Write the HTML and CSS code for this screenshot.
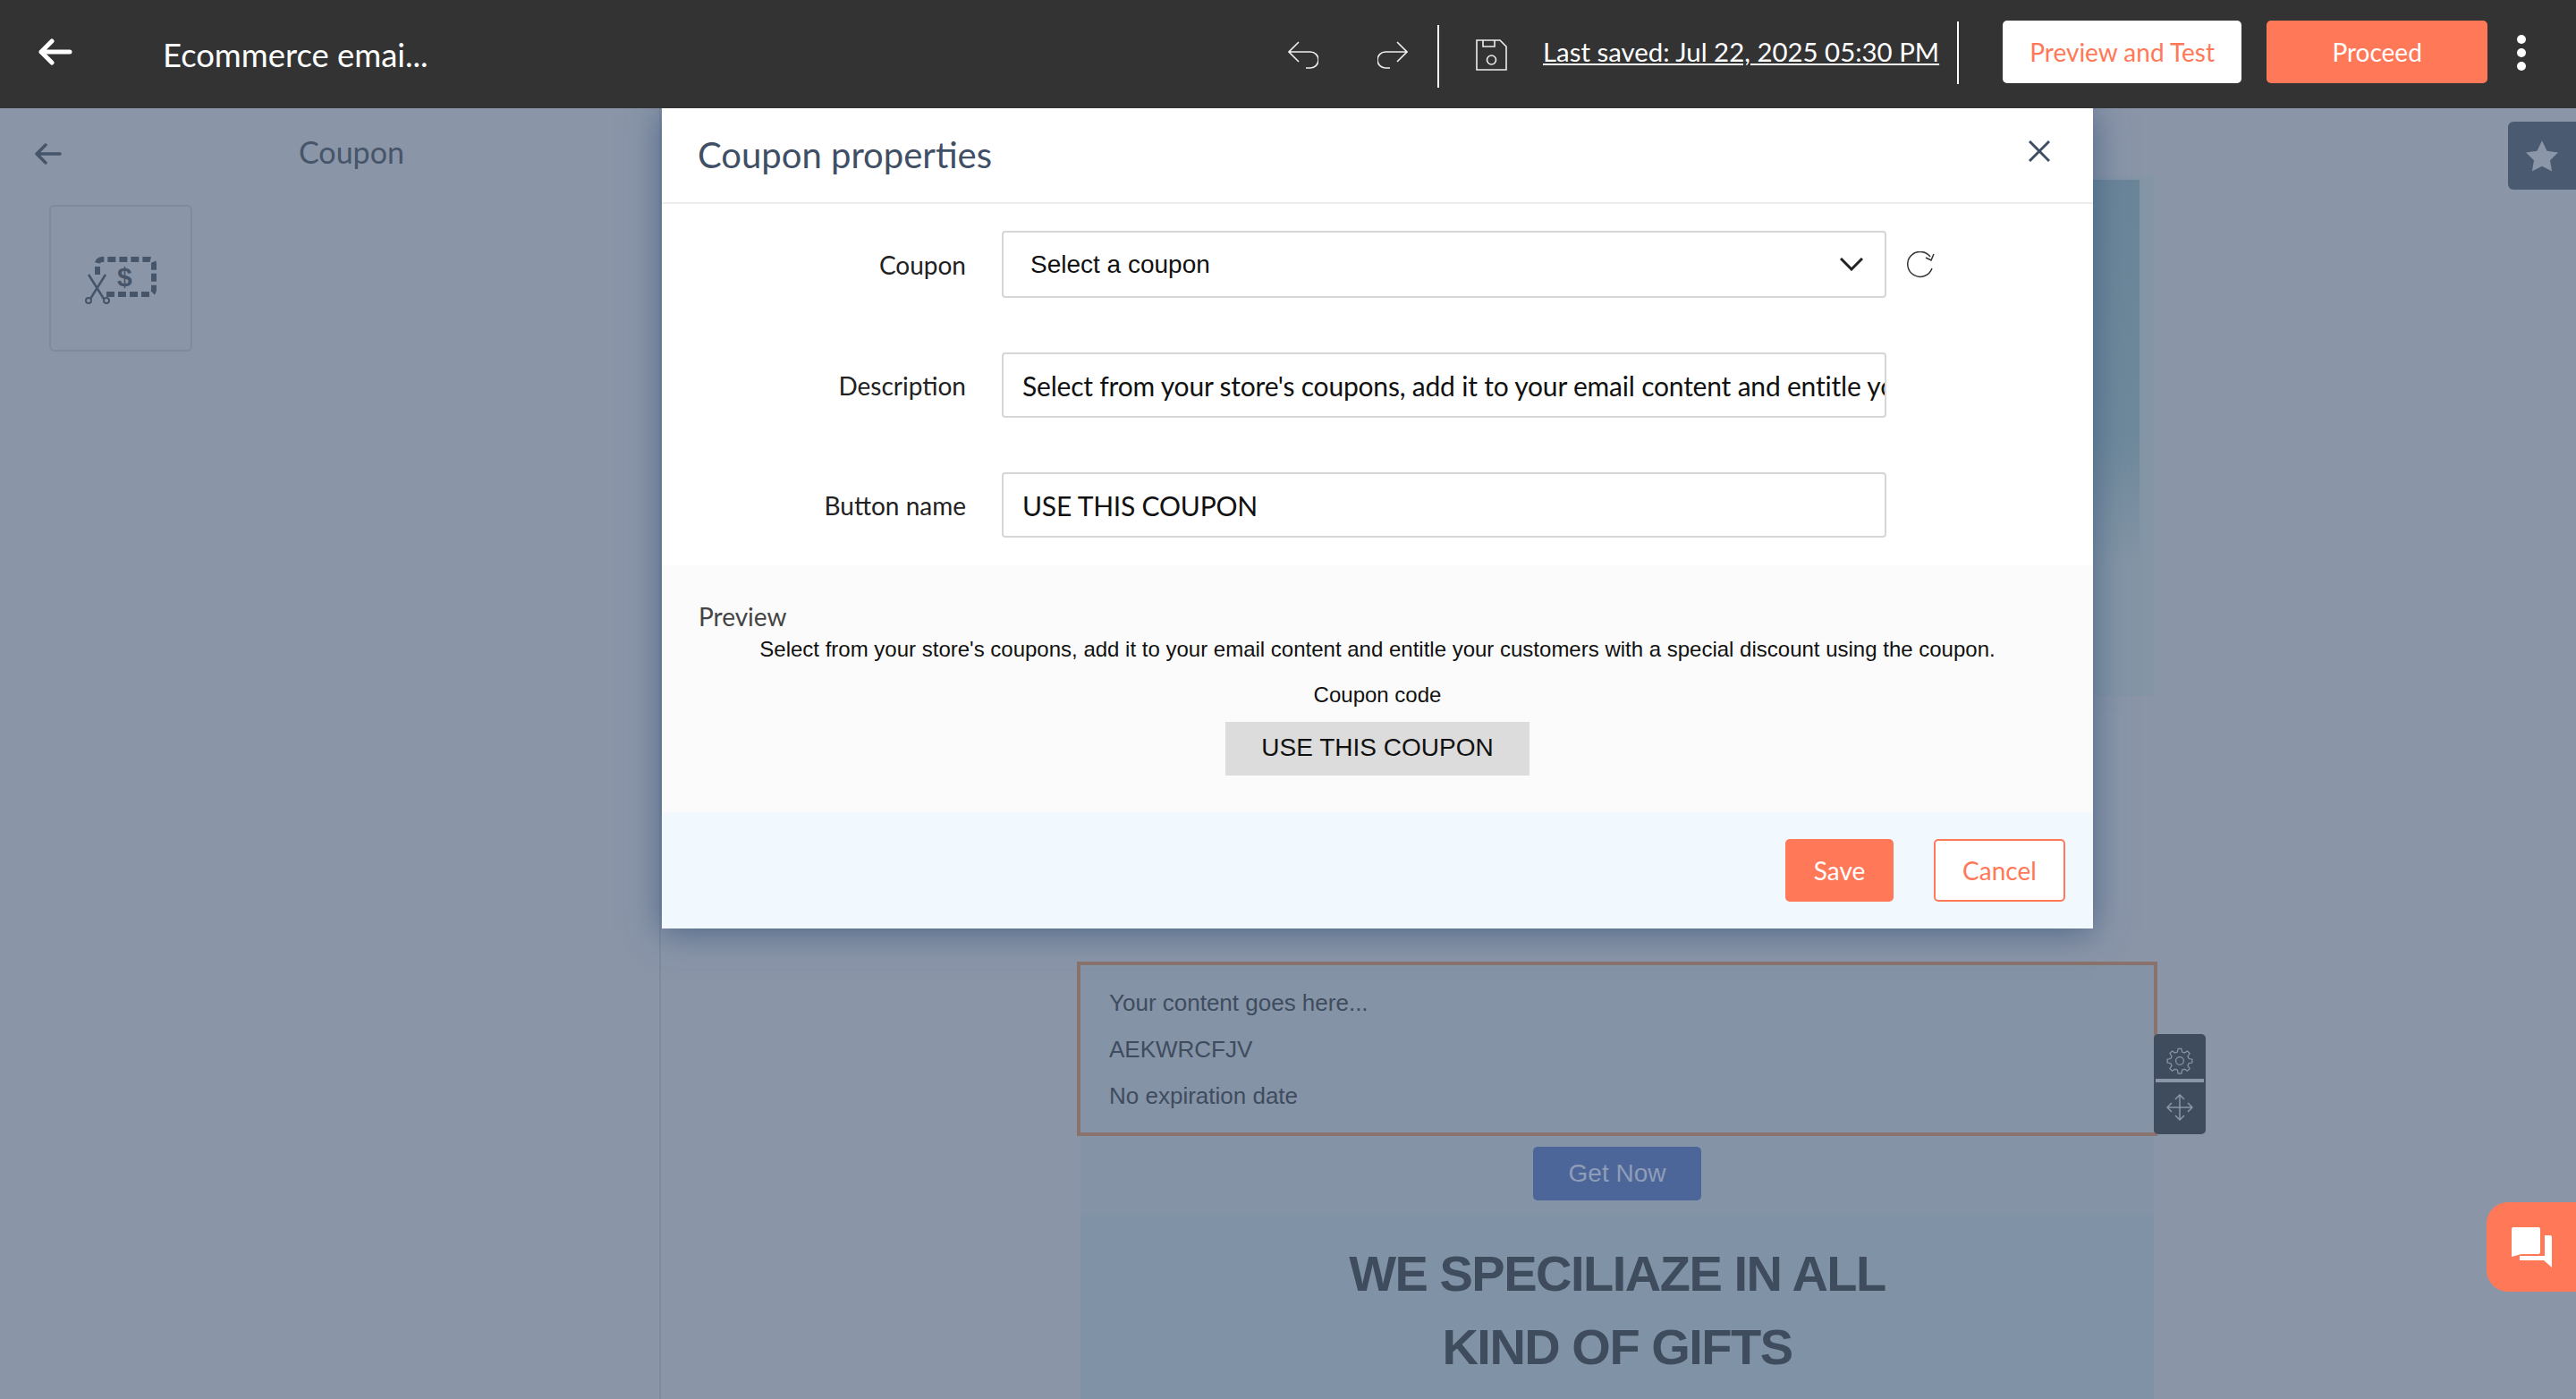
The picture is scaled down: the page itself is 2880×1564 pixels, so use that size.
FILE: index.html
```html
<!DOCTYPE html>
<html lang="en">
<head>
    <meta charset="UTF-8">
    <meta name="viewport" content="width=device-width, initial-scale=1.0">
    <title>Coupon properties</title>
    <link rel="stylesheet" href="styles.css">
</head>
<body>

    <header class="topbar">
        <button class="top-back">
            <svg width="38" height="30" viewBox="0 0 38 30" fill="none" stroke="#fff" stroke-width="5" stroke-linecap="round" stroke-linejoin="round"><path d="M35 15H3M15 3 3 15l12 12"/></svg>
        </button>
        <div class="doc-name">Ecommerce emai...</div>
        <div class="top-tools">
            <svg class="undo" width="34" height="31" viewBox="0 0 34 31" fill="none" stroke="#eee" stroke-width="1.6"><path d="M12 1 1 12l11 11M1 12h24a7.500 7.500 0 0 1 0 18h-5"/></svg>
            <svg class="redo" width="34" height="31" viewBox="0 0 34 31" fill="none" stroke="#eee" stroke-width="1.6"><path d="M22 1l11 11-11 11M33 12H9a7.500 7.500 0 0 0 0 18h5"/></svg>
            <span class="divider"></span>
            <svg class="save-icon" width="35" height="35" viewBox="0 0 35 35" fill="none" stroke="#eee" stroke-width="1.6"><path d="M1 1h26l7 7v26H1zM8 1v7h13V1"/><circle cx="17.500" cy="23" r="5"/></svg>
            <a class="last-saved">Last saved: Jul 22, 2025 05:30 PM</a>
            <span class="divider high"></span>
        </div>
        <button class="btn btn-white">Preview and Test</button>
        <button class="btn btn-orange">Proceed</button>
        <div class="dots"><i></i><i></i><i></i></div>
    </header>

    <main class="workspace">
        <aside class="side-panel">
            <div class="side-head">
                <svg width="30" height="24" viewBox="0 0 30 24" fill="none" stroke="#47556a" stroke-width="3.500" stroke-linecap="round" stroke-linejoin="round"><path d="M28 12H2M12 2 2 12l10 10"/></svg>
                <span>Coupon</span>
            </div>
            <div class="coupon-tile">
                <svg class="tile-icon" width="80" height="54" viewBox="0 0 80 54" fill="none">
                    <path d="M14 20V8a5 5 0 0 1 5-5h53a5 5 0 0 1 5 5v29a5 5 0 0 1-5 5H24" stroke="#47556a" stroke-width="6" stroke-dasharray="9 4"/>
                    <text x="36" y="33" class="tile-dollar">$</text>
                    <path d="M4 20l17 27M23 20 6 47" stroke="#47556a" stroke-width="2.500"/>
                    <circle cx="4" cy="49" r="3" stroke="#47556a" stroke-width="2"/>
                    <circle cx="24" cy="49" r="3" stroke="#47556a" stroke-width="2"/>
                </svg>
            </div>
        </aside>

        <section class="canvas">
            <div class="email">
                <div class="hero-block"><div class="hero-image"></div></div>
                <div class="text-block"></div>
                <div class="coupon-block">
                    <p>Your content goes here...</p>
                    <p>AEKWRCFJV</p>
                    <p>No expiration date</p>
                    <div class="block-tools">
                        <svg width="30" height="30" viewBox="0 0 24 24" fill="none" stroke="#8a95a8" stroke-width="1"><circle cx="12" cy="12" r="3.500"/><path d="M10.500 1h3l.6 3 2.200.9 2.500-1.700 2.100 2.100-1.700 2.500.9 2.200 3 .6v3l-3 .6-.9 2.200 1.700 2.500-2.100 2.100-2.500-1.700-2.200.9-.6 3h-3l-.6-3-2.200-.9-2.500 1.700-2.100-2.100 1.700-2.500-.9-2.200-3-.6v-3l3-.6.9-2.200-1.700-2.500 2.100-2.100 2.500 1.700 2.200-.9z"/></svg>
                        <span class="tools-sep"></span>
                        <svg width="30" height="30" viewBox="0 0 30 30" fill="none" stroke="#8a95a8" stroke-width="1.500"><path d="M15 1v28M1 15h28M10 6l5-5 5 5M10 24l5 5 5-5M6 10l-5 5 5 5M24 10l5 5-5 5"/></svg>
                    </div>
                </div>
                <div class="cta-row"><span class="cta">Get Now</span></div>
                <div class="gift-block">
                    <h2>WE SPECILIAZE IN ALL<br>KIND OF GIFTS</h2>
                </div>
            </div>
        </section>

        <div class="star-tab">
            <svg width="36" height="35" viewBox="0 0 24 23" fill="#8b96a8"><path d="M12 0l3.700 7.600 8.300 1.200-6 5.800 1.400 8.300L12 19l-7.400 3.900L6 14.600 0 8.800l8.300-1.200z"/></svg>
        </div>

        <div class="chat-tab">
            <svg width="46" height="45" viewBox="0 0 46 45" fill="#fff"><path d="M3 0h28a2 2 0 0 1 2 2v26a2 2 0 0 1-2 2H12L1 33V2a2 2 0 0 1 2-2z"/><path d="M38 9h6a2 2 0 0 1 2 2v34l-9-8H10v-5h28z"/></svg>
        </div>

        <div class="modal">
            <div class="modal-head">
                <h3>Coupon properties</h3>
                <svg width="24" height="24" viewBox="0 0 24 24" fill="none" stroke="#3f4d62" stroke-width="3"><path d="M1 1l22 22M23 1 1 23"/></svg>
            </div>
            <form class="modal-form">
                <div class="field-row row-coupon">
                    <label>Coupon</label>
                    <div class="field select-field">
                        <span>Select a coupon</span>
                        <svg width="26" height="15" viewBox="0 0 26 15" fill="none" stroke="#222" stroke-width="3"><path d="M1 1l12 12L25 1"/></svg>
                    </div>
                    <svg class="refresh" width="33" height="30" viewBox="0 0 33 30" fill="none" stroke="#333" stroke-width="1.500"><path d="M27 6A14 14 0 1 0 29 19"/><path d="M31 3l-3 7-6-3"/></svg>
                </div>
                <div class="field-row row-desc">
                    <label>Description</label>
                    <div class="field text-field">Select from your store's coupons, add it to your email content and entitle your customers with a special discount using the coupon.</div>
                </div>
                <div class="field-row row-name">
                    <label>Button name</label>
                    <div class="field text-field">USE THIS COUPON</div>
                </div>
            </form>
            <div class="preview">
                <div class="preview-title">Preview</div>
                <p class="preview-desc">Select from your store's coupons, add it to your email content and entitle your customers with a special discount using the coupon.</p>
                <p class="preview-code">Coupon code</p>
                <span class="preview-btn">USE THIS COUPON</span>
            </div>
            <div class="modal-foot">
                <button class="btn btn-orange btn-save">Save</button>
                <button class="btn btn-outline">Cancel</button>
            </div>
        </div>
    </main>

</body>
</html>
```

FILE: styles.css
```css
* {
    box-sizing: border-box;
}

body {
    margin: 0;
    height: 100vh;
    overflow: hidden;
    font-family: Lato, "Noto Sans", sans-serif;
    background-color: #8a95a8;
    display: flex;
    flex-direction: column;
}

svg {
    display: block;
    flex: none;
}

button {
    font-family: inherit;
}

/* top bar */
.topbar {
    height: 121px;
    flex: none;
    background-color: #333333;
    display: flex;
    align-items: center;
    color: white;
}

.top-back {
    background: none;
    border: none;
    padding: 0;
    margin: -5px 0 0 43px;
}

.doc-name {
    font-size: 36.400px;
    margin-left: 101px;
    width: 1258px;
}

.top-tools {
    display: flex;
    align-items: center;
}

.undo {
    margin-top: 2px;
}

.redo {
    margin: 2px 0 0 66px;
}

.divider {
    width: 2px;
    height: 70px;
    background-color: white;
    margin: 4px 0 0 33px;
}

.divider.high {
    margin: -4px 0 0 20px;
}

.save-icon {
    margin-left: 41px;
    margin-top: 2px;
}

.last-saved {
    font-size: 29.400px;
    text-decoration: underline;
    margin: -6px 0 0 40px;
    white-space: nowrap;
}

.btn {
    border: none;
    border-radius: 5px;
    font-size: 28px;
    height: 70px;
    cursor: pointer;
}

.topbar .btn {
    margin-top: -5px;
}

.btn-white {
    background-color: white;
    color: #ff7858;
    width: 267px;
    margin-left: 49px;
}

.btn-orange {
    background-color: #ff7858;
    color: white;
    width: 247px;
    margin-left: 28px;
}

.dots {
    margin: -4px 0 0 33px;
    display: flex;
    flex-direction: column;
    gap: 5px;
}

.dots i {
    display: block;
    width: 10px;
    height: 10px;
    border-radius: 50%;
    background-color: white;
}

/* page behind the dialog */
.workspace {
    flex: 1;
    position: relative;
    display: flex;
    overflow: hidden;
}

.side-panel {
    width: 739px;
    flex: none;
    border-right: 2px solid #7f8a9e;
    padding: 0 0 0 39px;
}

.side-head {
    display: flex;
    align-items: center;
    height: 54px;
    margin-top: 24px;
    color: #47556a;
    font-size: 34px;
}

.side-head span {
    margin: -6px 0 0 265px;
}

.coupon-tile {
    width: 160px;
    height: 164px;
    margin: 30px 0 0 16px;
    border: 2px solid #7f8a9e;
    border-radius: 6px;
    display: flex;
    align-items: center;
    justify-content: center;
}

.tile-icon {
    margin-top: 5px;
}

.tile-dollar {
    font-family: "Liberation Sans", sans-serif;
    font-weight: bold;
    font-size: 30px;
    fill: #47556a;
}

.canvas {
    flex: 1;
    display: flex;
    padding: 76px 0 0 469px;
}

.email {
    width: 1200px;
    display: flex;
    flex-direction: column;
}

.hero-block {
    height: 581px;
    flex: none;
    padding: 4px 16px 0 0;
    background-color: #8495a6;
}

.hero-image {
    height: 100%;
    background: linear-gradient(#6b8599, #6f899c 50%, #8495a6 75%);
}

.text-block {
    height: 252px;
    flex: none;
    margin: 19px 34px 26px 0;
    background-color: #8b96a9;
}

.coupon-block {
    position: relative;
    height: 195px;
    flex: none;
    margin: 0 -4px;
    padding: 27px 32px 0;
    border: 4px solid #8a736c;
    background-color: #8593a6;
    font-family: "Liberation Sans", sans-serif;
    font-size: 26px;
    color: #3f4c5e;
}

.coupon-block p {
    margin: 0 0 22px;
    line-height: 30px;
}

.block-tools {
    position: absolute;
    left: 100%;
    top: 77px;
    width: 58px;
    height: 112px;
    border-radius: 5px;
    background-color: #3f4c5e;
    display: flex;
    flex-direction: column;
    align-items: center;
    padding-top: 15px;
}

.tools-sep {
    width: 54px;
    height: 4px;
    margin: 5px 0 13px;
    background-color: #8a95a8;
}

.cta-row {
    display: flex;
    justify-content: center;
    padding-top: 12px;
    height: 87px;
    flex: none;
    background-color: #8593a6;
}

.cta {
    width: 188px;
    height: 60px;
    border-radius: 5px;
    background-color: #4d6699;
    color: #8f9db8;
    font-family: "Liberation Sans", sans-serif;
    font-size: 28px;
    line-height: 60px;
    text-align: center;
}

.gift-block {
    flex: 1;
    background-color: #8093a6;
    padding-top: 26px;
}

.gift-block h2 {
    margin: 0;
    font-family: "Liberation Sans", sans-serif;
    font-size: 56px;
    letter-spacing: -1.500px;
    line-height: 82px;
    text-align: center;
    color: #3f4c5e;
}

.star-tab {
    position: absolute;
    top: 15px;
    right: 0;
    width: 76px;
    height: 76px;
    border-radius: 6px 0 0 6px;
    background-color: #4a5a70;
    display: flex;
    align-items: center;
    justify-content: center;
}

.chat-tab {
    position: absolute;
    top: 1223px;
    right: 0;
    width: 100px;
    height: 100px;
    border-radius: 24px 0 0 24px;
    background-color: #ff7858;
    display: flex;
    align-items: center;
    padding-left: 27px;
}

/* dialog */
.modal {
    position: absolute;
    top: 0;
    left: 740px;
    width: 1600px;
    height: 917px;
    background-color: white;
    box-shadow: 0 4px 36px rgba(60, 90, 125, 0.8);
    display: flex;
    flex-direction: column;
}

.modal-head {
    height: 107px;
    flex: none;
    border-bottom: 2px solid #ededed;
    padding: 0 48px 0 40px;
    display: flex;
    align-items: center;
    justify-content: space-between;
}

.modal-head h3 {
    margin: -2px 0 0;
    font-size: 40px;
    font-weight: 400;
    color: #3f4f66;
}

.modal-head svg {
    margin-top: -10px;
}

.modal-form {
    height: 404px;
    flex: none;
    padding-top: 30px;
}

.field-row {
    display: flex;
    align-items: center;
    margin-bottom: 61px;
}

.field-row label {
    width: 340px;
    text-align: right;
    font-size: 28px;
    color: #222222;
}

.field {
    width: 989px;
    margin-left: 40px;
    border: 2px solid #d6d6d6;
    border-radius: 4px;
    color: #111111;
}

.select-field {
    height: 75px;
    padding: 0 24px 0 30px;
    display: flex;
    align-items: center;
    justify-content: space-between;
    font-family: "Liberation Sans", sans-serif;
    font-size: 28px;
}

.text-field {
    height: 73px;
    padding: 0 0 0 21px;
    font-size: 30px;
    letter-spacing: -0.200px;
    line-height: 71px;
    white-space: nowrap;
    overflow: hidden;
}

.refresh {
    margin-left: 22px;
}

.preview {
    height: 276px;
    flex: none;
    background-color: #fbfbfb;
    display: flex;
    flex-direction: column;
    align-items: center;
    padding-top: 40px;
    font-family: "Liberation Sans", sans-serif;
    color: #111111;
}

.preview-title {
    align-self: flex-start;
    margin-left: 41px;
    font-family: Lato, sans-serif;
    font-size: 28px;
    line-height: 34px;
    color: #444444;
}

.preview-desc {
    margin: 6px 0 0;
    font-size: 24px;
    line-height: 28px;
}

.preview-code {
    margin: 23px 0 0;
    font-size: 24px;
    line-height: 28px;
}

.preview-btn {
    margin-top: 16px;
    width: 340px;
    height: 60px;
    background-color: #dcdcdc;
    font-size: 28px;
    line-height: 58px;
    text-align: center;
}

.modal-foot {
    flex: 1;
    background-color: #f1f9ff;
    padding-right: 31px;
    display: flex;
    align-items: center;
    justify-content: flex-end;
}

.btn-save {
    width: 121px;
    margin-left: 0;
}

.btn-outline {
    width: 147px;
    margin-left: 45px;
    background-color: white;
    border: 2px solid #ff7858;
    color: #ff7858;
}
```
